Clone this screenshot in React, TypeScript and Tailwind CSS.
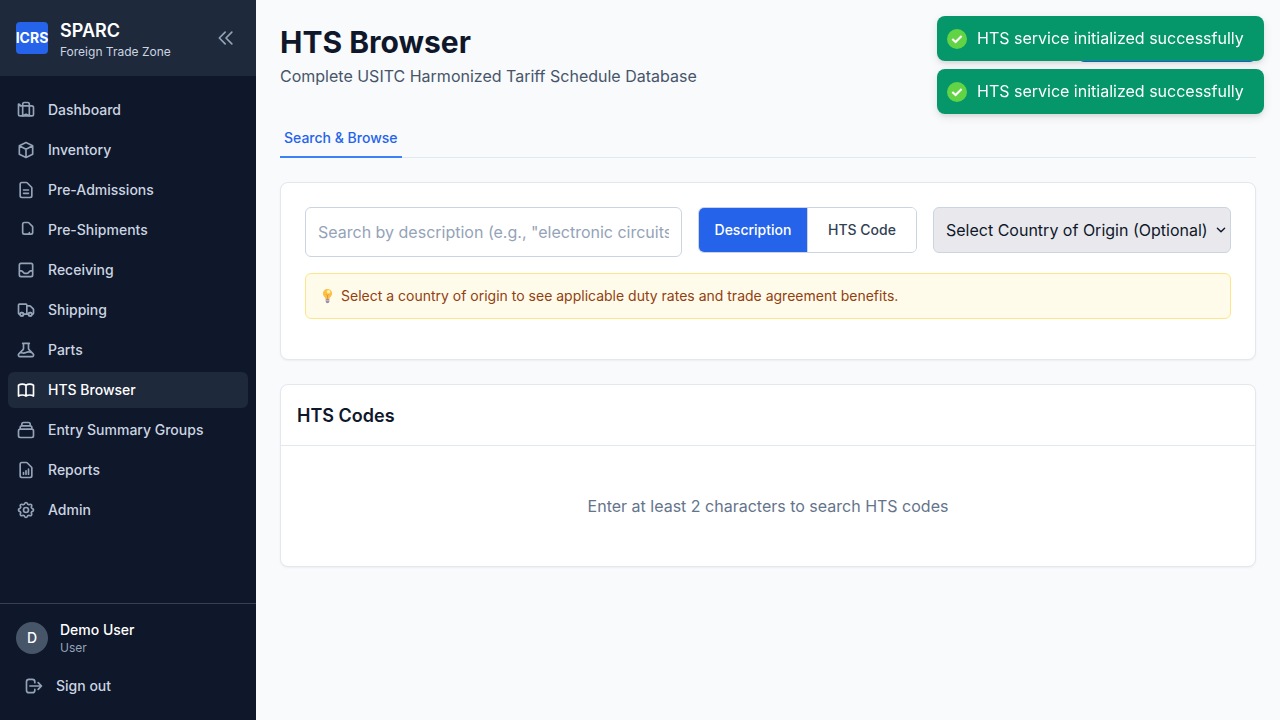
import type { ReactNode } from "react";

function Icon({ children, className = "" }: { children: ReactNode; className?: string }) {
  return (
    <svg viewBox="0 0 24 24" fill="none" stroke="currentColor" strokeWidth={2} strokeLinecap="round" strokeLinejoin="round" className={`size-5 shrink-0 ${className}`}>
      {children}
    </svg>
  );
}

const nav: { label: string; paths: string[] }[] = [
  {
    label: "Dashboard",
    paths: [
      "M3 7v10a2 2 0 002 2h14a2 2 0 002-2V9a2 2 0 00-2-2H5a2 2 0 00-2-2z",
      "M8 5a2 2 0 012-2h4a2 2 0 012 2v14l-4-2-4 2V5z",
    ],
  },
  { label: "Inventory", paths: ["M20 7l-8-4-8 4m16 0l-8 4m8-4v10l-8 4m0-10L4 7m8 4v10M4 7v10l8 4"] },
  { label: "Pre-Admissions", paths: ["M9 12h6m-6 4h6m2 5H7a2 2 0 01-2-2V5a2 2 0 012-2h5.586a1 1 0 01.707.293l5.414 5.414a1 1 0 01.293.707V19a2 2 0 01-2 2z"] },
  { label: "Pre-Shipments", paths: ["M8 7v8a2 2 0 002 2h6M8 7V5a2 2 0 012-2h4.586a1 1 0 01.707.293l4.414 4.414a1 1 0 01.293.707V15a2 2 0 01-2 2h-2v-2"] },
  { label: "Receiving", paths: ["M20 13V6a2 2 0 00-2-2H6a2 2 0 00-2 2v7m16 0v5a2 2 0 01-2 2H6a2 2 0 01-2-2v-5m16 0h-2.586a1 1 0 00-.707.293l-2.414 2.414a1 1 0 01-.707.293h-3.172a1 1 0 01-.707-.293l-2.414-2.414A1 1 0 006.586 13H4"] },
  {
    label: "Shipping",
    paths: [
      "M9 17a2 2 0 11-4 0 2 2 0 014 0zM19 17a2 2 0 11-4 0 2 2 0 014 0z",
      "M13 16V6a1 1 0 00-1-1H4a1 1 0 00-1 1v10a1 1 0 001 1h1m8-1a1 1 0 01-1 1H9m4-1V8a1 1 0 011-1h2.586a1 1 0 01.707.293l3.414 3.414a1 1 0 01.293.707V16a1 1 0 01-1 1h-1m-6-1a1 1 0 001 1h1M5 17a2 2 0 104 0m-4 0a2 2 0 114 0m6 0a2 2 0 104 0m-4 0a2 2 0 114 0",
    ],
  },
  { label: "Parts", paths: ["M19.428 15.428a2 2 0 00-1.022-.547l-2.387-.477a6 6 0 00-3.86.517l-.318.158a6 6 0 01-3.86.517L6.05 15.21a2 2 0 00-1.806.547M8 4h8l-1 1v5.172a2 2 0 00.586 1.414l5 5c1.26 1.26.367 3.414-1.415 3.414H4.828c-1.782 0-2.674-2.154-1.414-3.414l5-5A2 2 0 009 10.172V5L8 4z"] },
  { label: "HTS Browser", paths: ["M12 6.253v13m0-13C10.832 5.477 9.246 5 7.5 5S4.168 5.477 3 6.253v13C4.168 18.477 5.754 18 7.5 18s3.332.477 4.5 1.253m0-13C13.168 5.477 14.754 5 16.5 5c1.747 0 3.332.477 4.5 1.253v13C19.832 18.477 18.247 18 16.5 18c-1.746 0-3.332.477-4.5 1.253"] },
  { label: "Entry Summary Groups", paths: ["M19 11H5m14 0a2 2 0 012 2v6a2 2 0 01-2 2H5a2 2 0 01-2-2v-6a2 2 0 012-2m14 0V9a2 2 0 00-2-2M5 11V9a2 2 0 012-2m0 0V5a2 2 0 012-2h6a2 2 0 012 2v2M7 7h10"] },
  { label: "Reports", paths: ["M9 17v-2m3 2v-4m3 4v-6m2 10H7a2 2 0 01-2-2V5a2 2 0 012-2h5.586a1 1 0 01.707.293l5.414 5.414a1 1 0 01.293.707V19a2 2 0 01-2 2z"] },
  {
    label: "Admin",
    paths: [
      "M10.325 4.317c.426-1.756 2.924-1.756 3.35 0a1.724 1.724 0 002.573 1.066c1.543-.94 3.31.826 2.37 2.37a1.724 1.724 0 001.065 2.572c1.756.426 1.756 2.924 0 3.35a1.724 1.724 0 00-1.066 2.573c.94 1.543-.826 3.31-2.37 2.37a1.724 1.724 0 00-2.572 1.065c-.426 1.756-2.924 1.756-3.35 0a1.724 1.724 0 00-2.573-1.066c-1.543.94-3.31-.826-2.37-2.37a1.724 1.724 0 00-1.065-2.572c-1.756-.426-1.756-2.924 0-3.35a1.724 1.724 0 001.066-2.573c-.94-1.543.826-3.31 2.37-2.37.996.608 2.296.07 2.572-1.065z",
      "M15 12a3 3 0 11-6 0 3 3 0 016 0z",
    ],
  },
];

function Bulb() {
  return (
    <svg viewBox="0 0 19 16" className="mr-1 h-4 w-[19px] shrink-0">
      <path d="M9.5 1a4.6 4.6 0 0 0-4.6 4.6c0 2.6 2.3 3.3 2.7 5.4h3.8c.4-2.1 2.7-2.8 2.7-5.4A4.6 4.6 0 0 0 9.5 1z" fill="#fbbf45" />
      <circle cx="10.6" cy="3.7" r="1.8" fill="#fff0a8" />
      <path d="M8.2 6.5l1.3 1 1.3-1M9.5 7.5V11" stroke="#e08a1e" strokeWidth=".7" fill="none" />
      <path d="M7.7 11h3.6v2.4a1.8 1.8 0 0 1-3.6 0z" fill="#9b8fa8" />
      <path d="M7.9 12.4h3.2" stroke="#d8d0df" strokeWidth=".7" />
    </svg>
  );
}

function Toast() {
  return (
    <div className="flex h-[45px] w-[327px] items-center rounded-lg bg-[#059669] px-[10px] text-base text-white shadow-[0_3px_10px_rgba(0,0,0,0.1),0_3px_3px_rgba(0,0,0,0.05)]">
      <svg viewBox="0 0 20 20" className="size-5 shrink-0">
        <circle cx="10" cy="10" r="10" fill="#61d345" />
        <path d="M5.3 9.9l3.3 3.2 6-6" fill="none" stroke="white" strokeWidth="2.1" />
      </svg>
      <span className="ml-[10px] whitespace-nowrap leading-[21px]">HTS service initialized successfully</span>
    </div>
  );
}

export default function App() {
  return (
    <div className="flex h-screen overflow-hidden bg-[#f8fafc] font-['Inter',sans-serif] text-[#0f172a] antialiased">
      <aside className="flex w-64 shrink-0 flex-col bg-[#0f172a]">
        <header className="flex h-[76px] items-center bg-[#1e293b] px-4">
          <div className="flex size-8 items-center justify-center rounded bg-[#2563eb] text-sm font-bold text-white">ICRS</div>
          <div className="ml-3 flex-1 pt-1">
            <h1 className="text-lg leading-[22px] font-semibold text-white">SPARC</h1>
            <p className="text-xs leading-[19px] text-[#cbd5e1]">Foreign Trade Zone</p>
          </div>
          <button className="p-1 text-[#94a3b8]">
            <Icon><path d="M11 19l-7-7 7-7m8 14l-7-7 7-7" /></Icon>
          </button>
        </header>
        <nav className="flex flex-1 flex-col gap-1 px-2 pt-4">
          {nav.map(({ label, paths }) => {
            const active = label === "HTS Browser";
            return (
              <a key={label} className={`flex h-9 items-center gap-3 rounded-md px-2 text-sm font-medium ${active ? "bg-[#1e293b] text-white" : "text-[#cbd5e1]"}`}>
                <Icon className={active ? "text-white" : "text-[#94a3b8]"}>
                  {paths.map((d) => (
                    <path key={d} d={d} />
                  ))}
                </Icon>
                {label}
              </a>
            );
          })}
        </nav>
        <footer className="h-[117px] border-t border-[#334155] px-4 pt-4">
          <div className="flex items-center">
            <div className="flex size-8 items-center justify-center rounded-full bg-[#475569] text-sm font-medium text-white">D</div>
            <div className="ml-3">
              <p className="text-sm leading-5 font-medium text-white">Demo User</p>
              <p className="text-xs leading-4 text-[#94a3b8]">User</p>
            </div>
          </div>
          <button className="mt-3 flex h-9 items-center gap-3 px-2 text-sm font-medium text-[#cbd5e1]">
            <Icon className="text-[#94a3b8]"><path d="M17 16l4-4m0 0l-4-4m4 4H7m6 4v1a3 3 0 01-3 3H6a3 3 0 01-3-3V7a3 3 0 013-3h4a3 3 0 013 3v1" /></Icon>
            Sign out
          </button>
        </footer>
      </aside>

      <main className="min-w-0 flex-1 p-6">
        <div className="flex items-start justify-between">
          <div>
            <h2 className="text-3xl leading-9 font-bold">HTS Browser</h2>
            <p className="mt-1 leading-6 text-[#475569]">Complete USITC Harmonized Tariff Schedule Database</p>
          </div>
          <button className="h-[38px] w-[178px] rounded-md bg-[#2563eb]" />
        </div>

        <div className="mt-[31px] flex h-[39px] border-b border-[#e2e8f0]">
          <button className="h-[39px] border-b-2 border-[#3b82f6] px-1 text-sm font-medium text-[#2563eb]">Search &amp; Browse</button>
        </div>

        <section className="mt-6 h-[178px] rounded-lg border border-[#e2e8f0] bg-white p-6 shadow-xs">
          <div className="flex h-[50px] items-start gap-4">
            <input className="h-[50px] min-w-0 flex-1 rounded-md border border-[#cbd5e1] px-3 text-base placeholder:text-[#94a3b8]" placeholder={'Search by description (e.g., "electronic circuits")'} />
            <div className="flex h-[46px] w-[219px] shrink-0 overflow-hidden rounded-md border border-[#cbd5e1] text-sm font-medium">
              <button className="w-[108px] bg-[#2563eb] text-white">Description</button>
              <button className="flex-1 border-l border-[#cbd5e1] bg-white text-[#334155]">HTS Code</button>
            </div>
            <div className="relative w-[298px] shrink-0">
              <select className="block h-[45.5px] w-full appearance-none rounded-md border border-[#cbd5e1] bg-[#e9e9ed] pl-3 text-base text-[#0f172a]">
                <option>Select Country of Origin (Optional)</option>
              </select>
              <svg viewBox="0 0 10 6" className="pointer-events-none absolute top-[20px] right-[5px] h-1.5 w-2.5" fill="none" stroke="#0f172a" strokeWidth="1.4" strokeLinecap="round" strokeLinejoin="round">
                <path d="M1.4 1.2L5 4.8l3.6-3.6" />
              </svg>
            </div>
          </div>
          <div className="mt-4 flex h-[46px] items-center rounded-md border border-[#fde68a] bg-[#fffbeb] px-3 text-sm text-[#92400e]">
            <Bulb />
            Select a country of origin to see applicable duty rates and trade agreement benefits.
          </div>
        </section>

        <section className="mt-6 h-[183px] rounded-lg border border-[#e2e8f0] bg-white shadow-xs">
          <h3 className="flex h-[61px] items-center border-b border-[#e2e8f0] px-4 pt-0.5 text-lg font-semibold">HTS Codes</h3>
          <p className="flex h-[120px] items-center justify-center text-[#64748b]">Enter at least 2 characters to search HTS codes</p>
        </section>
      </main>

      <div className="fixed top-4 right-4 flex flex-col gap-2">
        <Toast />
        <Toast />
      </div>
    </div>
  );
}
